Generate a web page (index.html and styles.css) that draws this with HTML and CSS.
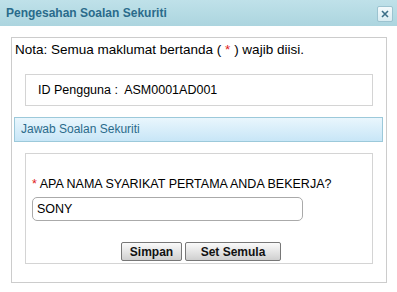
FILE: index.html
```html
<!DOCTYPE html>
<html lang="ms">

<head>
    <meta charset="UTF-8">
    <meta name="viewport" content="width=device-width, initial-scale=1.0">
    <title>Pengesahan Soalan Sekuriti</title>
    <link rel="stylesheet" href="styles.css">
</head>

<body>

    <div class="dialog">
        <div class="titlebar">
            <span class="title">Pengesahan Soalan Sekuriti</span>
            <button class="close" title="Tutup">
                <svg width="8" height="8" viewBox="0 0 8 8">
                    <path d="M1 1 L7 7 M7 1 L1 7" stroke="#3c6f88" stroke-width="1.6" fill="none" />
                </svg>
            </button>
        </div>

        <div class="content">
            <div class="outer">
                <div class="note">Nota: Semua maklumat bertanda ( <span class="req">*</span> ) wajib diisi.</div>

                <div class="box user-box">
                    ID Pengguna :&nbsp; ASM0001AD001
                </div>

                <div class="section-head">Jawab Soalan Sekuriti</div>

                <div class="box question-box">
                    <label for="answer" class="question"><span class="req">*</span> APA NAMA SYARIKAT PERTAMA ANDA BEKERJA?</label>
                    <input type="text" id="answer" value="SONY">
                    <div class="actions">
                        <button class="btn">Simpan</button>
                        <button class="btn btn-wide">Set Semula</button>
                    </div>
                </div>
            </div>
        </div>

        <div class="footer"></div>
    </div>

</body>

</html>
```

FILE: styles.css
```css
body {
    font-family: "Liberation Sans", Arial, sans-serif;
    font-size: 12px;
    color: #000;
    margin: 0;
    padding: 0;
    background-color: #fff;
}

.dialog {
    width: 397px;
}

.titlebar {
    height: 26px;
    display: flex;
    align-items: center;
    justify-content: space-between;
    padding: 0 4px 0 6px;
    box-sizing: border-box;
    background: linear-gradient(#bfe1e9, #acd5df);
}

.title {
    font-weight: bold;
    font-size: 12px;
    color: #2a6b8b;
}

.close {
    width: 16px;
    height: 16px;
    padding: 0;
    margin-top: 1px;
    display: flex;
    align-items: center;
    justify-content: center;
    background: linear-gradient(#f4fafc, #d8ecf2);
    border: 1px solid #9cc3d0;
    border-radius: 2px;
    cursor: pointer;
}

.content {
    padding: 11px 10px 0 11px;
}

.outer {
    border: 1px solid #cccccc;
    height: 240px;
    padding-top: 4px;
}

.note {
    font-size: 13.5px;
    padding-left: 3px;
    height: 20px;
    line-height: 15px;
}

.req {
    color: #e02020;
}

.box {
    border: 1px solid #d4d4d4;
    margin: 0 13px;
}

.user-box {
    margin-top: 12px;
    height: 30px;
    line-height: 30px;
    padding-left: 12px;
    font-size: 12.5px;
}

.section-head {
    margin: 11px 3px 0 2px;
    height: 23px;
    line-height: 23px;
    padding-left: 6px;
    color: #2a6b8b;
    border: 1px solid #9cc9da;
    background: linear-gradient(#e9f6fd, #c8e6f7);
}

.question-box {
    margin-top: 11px;
    padding: 23px 0 0 6px;
    box-sizing: border-box;
    height: 111px;
}

.question {
    display: block;
    line-height: 14px;
    font-size: 12.5px;
}

input {
    display: block;
    width: 271px;
    height: 24px;
    margin-top: 6px;
    padding: 0 4px;
    box-sizing: border-box;
    font-family: "Liberation Sans", Arial, sans-serif;
    font-size: 12.5px;
    border: 1px solid #aaaaaa;
    border-radius: 5px;
}

.actions {
    display: flex;
    gap: 3px;
    margin: 21px 0 0 89px;
}

.btn {
    height: 19px;
    width: 61px;
    padding: 0;
    font-family: "Liberation Sans", Arial, sans-serif;
    font-weight: bold;
    font-size: 12px;
    color: #111;
    border: 1px solid #777777;
    border-radius: 2px;
    background: linear-gradient(#fafafa, #e3e3e3 55%, #cfcfcf);
    cursor: pointer;
}

.btn-wide {
    width: 96px;
}

.footer {
    margin-top: 11px;
    border-top: 1px solid #cccccc;
}
```
